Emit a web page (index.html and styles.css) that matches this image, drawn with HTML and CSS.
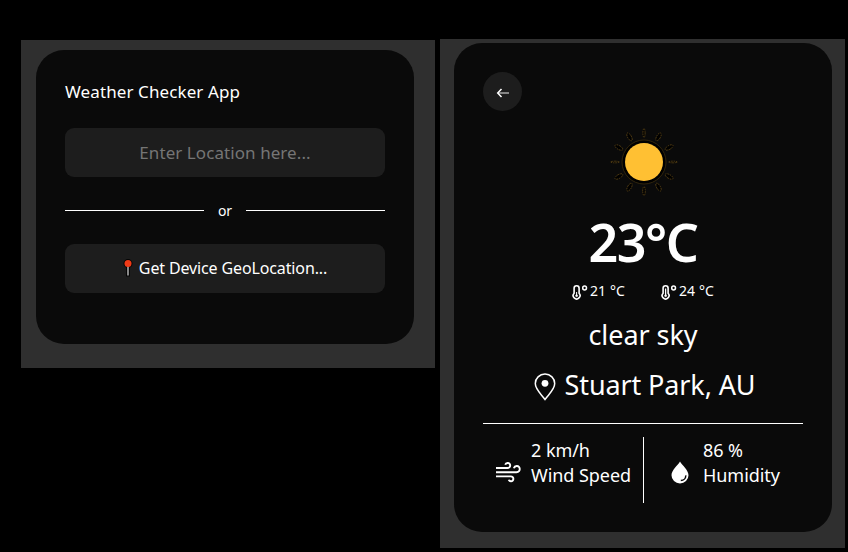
FILE: index.html
```html
<!DOCTYPE html>
<html lang="en">
<head>
<meta charset="utf-8">
<title>Weather Checker App</title>
<link rel="stylesheet" href="styles.css">
</head>
<body>
<main class="screens">
  <section class="panel panel-search">
    <div class="card card-search">
      <h1 class="title">Weather Checker App</h1>
      <input class="field" type="text" placeholder="Enter Location here...">
      <div class="divider"><span class="divider-text">or</span></div>
      <button class="geo" type="button">
        <svg class="pin" viewBox="0 0 10 18"><circle cx="5" cy="4.6" r="4.5" fill="#050505"/><path d="M3 8h4v9.400H3z" fill="#050505"/><path d="M5 7v9.500" stroke="#e0e0e0" stroke-width="1.2"/><circle cx="5" cy="4.5" r="3.500" fill="#f03a17"/></svg>
        <span class="geo-text">Get Device GeoLocation...</span>
      </button>
    </div>
  </section>
  <section class="panel panel-weather">
    <div class="card card-weather">
      <button class="back" type="button" aria-label="Back">
        <svg width="14" height="12" viewBox="0 0 14 12" fill="none"><path d="M2 6h11" stroke="#a0a0a0" stroke-width="1.6"/><path d="M5.500 2 1.700 6l3.800 4" stroke="#fff" stroke-width="1.500"/></svg>
      </button>
      <svg class="sun" width="71" height="70" viewBox="-36 -35 71 70">
        <circle r="22" fill="#000" stroke="#3c2d0e" stroke-width=".8"/>
        <circle r="19" fill="#ffc033"/>
        <g fill="#000" stroke="#6b501a" stroke-width=".7" stroke-dasharray="1.6 .8">
          <ellipse cx="0" cy="-29" rx="1.1" ry="4.400"/>
          <ellipse cx="0" cy="-29" rx="1.900" ry="4.400" transform="rotate(30)"/>
          <ellipse cx="0" cy="-29" rx="1.900" ry="4.400" transform="rotate(60)"/>
          <ellipse cx="0" cy="-29" rx=".8" ry="4.400" transform="rotate(90)"/>
          <ellipse cx="0" cy="-29" rx="1.900" ry="4.400" transform="rotate(120)"/>
          <ellipse cx="0" cy="-29" rx="1.900" ry="4.400" transform="rotate(150)"/>
          <ellipse cx="0" cy="-29" rx="1.300" ry="4.400" transform="rotate(180)"/>
          <ellipse cx="0" cy="-29" rx="1.900" ry="4.400" transform="rotate(210)"/>
          <ellipse cx="0" cy="-29" rx="1.900" ry="4.400" transform="rotate(240)"/>
          <ellipse cx="0" cy="-29" rx=".8" ry="4.400" transform="rotate(270)"/>
          <ellipse cx="0" cy="-29" rx="1.900" ry="4.400" transform="rotate(300)"/>
          <ellipse cx="0" cy="-29" rx="1.900" ry="4.400" transform="rotate(330)"/>
        </g>
      </svg>
      <div class="temp">23°C</div>
      <div class="range">
        <div class="range-item">
          <svg width="16" height="16" viewBox="0 0 16 16" fill="none" stroke="#fff"><path d="M2.100 9.200V4.200a2.500 2.500 0 0 1 5 0v5a3.400 3.400 0 1 1-5 0Z" stroke-width="1.600"/><path d="M4.600 8v3.300" stroke-width="1"/><circle cx="4.600" cy="11.700" r="1" fill="#fff" stroke-width=".6"/><circle cx="12.600" cy="4" r="1.900" stroke-width="1.500"/></svg>
          <span>21 °C</span>
        </div>
        <div class="range-item">
          <svg width="16" height="16" viewBox="0 0 16 16" fill="none" stroke="#fff"><path d="M2.100 9.200V4.200a2.500 2.500 0 0 1 5 0v5a3.400 3.400 0 1 1-5 0Z" stroke-width="1.600"/><path d="M4.600 4.500v7" stroke-width="1.300"/><circle cx="4.600" cy="11.700" r="1" fill="#fff" stroke-width=".6"/><circle cx="12.600" cy="4" r="1.900" stroke-width="1.500"/></svg>
          <span>24 °C</span>
        </div>
      </div>
      <div class="sky">clear sky</div>
      <div class="place">
        <svg width="22" height="28" viewBox="0 0 22 28"><path d="M11 1.100c-5.500 0-9.700 4.200-9.700 9.500C1.300 16.500 7 21 11 26.500 15 21 20.700 16.500 20.700 10.600 20.700 5.300 16.500 1.100 11 1.100Z" fill="none" stroke="#fff" stroke-width="1.500"/><circle cx="11" cy="10.300" r="3.400" fill="#fff"/></svg>
        <span>Stuart Park, AU</span>
      </div>
      <div class="stats">
        <div class="stat stat-wind">
          <svg width="26" height="22" viewBox="0 0 26 22" fill="none" stroke="#fff" stroke-width="1.900"><path d="M1 7h11.500c3.800 0 3.300-5.300.1-5-1.300.1-2.100.8-2.400 1.800"/><path d="M1 11.200h20.500c4.600 0 4-6.500.2-6.200-1.700.1-2.500 1-2.900 2.200"/><path d="M1 15.400h14.700c3.700 0 3.300 5 .2 4.800-1.100-.1-1.900-.6-2.200-1.500"/></svg>
          <div class="stat-text"><span>2 km/h</span><span>Wind Speed</span></div>
        </div>
        <div class="stat stat-humidity">
          <svg width="18" height="23" viewBox="0 0 18 23"><path d="M9 .5C7 4.200.5 9 .5 14.200a8.500 8.300 0 0 0 17 0C17.500 9 11 4.200 9 .5Z" fill="#fff"/><path d="M14.800 14.400c.1 2.900-2.200 5-5 5.200" fill="none" stroke="#0a0a0a" stroke-width="1.500"/></svg>
          <div class="stat-text"><span>86 %</span><span>Humidity</span></div>
        </div>
      </div>
    </div>
  </section>
</main>
</body>
</html>
```
FILE: styles.css
```css
* { box-sizing: border-box; }
body {
  margin: 0;
  background: #000;
  color: #fff;
  font-family: "Noto Sans", "Open Sans", sans-serif;
}
button, input { font: inherit; color: inherit; border: 0; outline: 0; }
svg { display: block; flex: none; }
.screens {
  display: flex;
  align-items: flex-start;
  gap: 5px;
  height: 552px;
  padding: 39px 0 0 21px;
}
.panel { background: #2f2f2f; flex: none; }
.panel-search { width: 414px; height: 328px; margin-top: 1px; padding: 10px 21px 0 15px; }
.panel-weather { width: 405px; height: 509px; padding: 4px 13px 0 14px; }
.card { background: #0a0a0a; border-radius: 28px; padding: 29px; }
.card-search { height: 294px; }
.card-weather { height: 489px; display: flex; flex-direction: column; align-items: center; }
.title { margin: 0; font-size: 17px; line-height: 25px; font-weight: 400; letter-spacing: .1px; }
.field {
  display: block;
  width: 100%;
  height: 49px;
  margin-top: 24px;
  padding: 0;
  border-radius: 9px;
  background: #1d1d1d;
  text-align: center;
  font-size: 17px;
  letter-spacing: .07px;
}
.field::placeholder { color: #757575; opacity: 1; }
.divider {
  display: flex;
  align-items: center;
  gap: 14px;
  height: 20px;
  margin-top: 23px;
  font-size: 14px;
}
.divider::before, .divider::after { content: ""; flex: 1; height: 1px; background: #fff; }
.divider-text { padding-top: 2px; line-height: 20px; }
.geo {
  display: flex;
  align-items: center;
  justify-content: center;
  gap: 6px;
  width: 100%;
  height: 49px;
  margin-top: 24px;
  padding: 0 0 2px;
  border-radius: 9px;
  background: #1d1d1d;
  font-size: 16px;
  letter-spacing: -.13px;
}
.pin { width: 10px; height: 18px; margin-top: 1px; }
.back {
  display: grid;
  place-items: center;
  align-self: flex-start;
  width: 39px;
  height: 39px;
  padding: 3px 0 0;
  border-radius: 50%;
  background: #1d1d1d;
}
.sun { margin-top: 16px; }
.temp { margin-top: 10px; font-size: 52px; line-height: 70px; font-weight: 600; letter-spacing: -1.4px; }
.range { display: flex; gap: 36px; height: 20px; margin-top: 4px; font-size: 14px; line-height: 20px; letter-spacing: .1px; }
.range-item { display: flex; align-items: center; gap: 2px; }
.range-item svg { margin-top: 2px; }
.sky { margin-top: 14px; font-size: 27px; line-height: 40px; letter-spacing: -.05px; }
.place { display: flex; align-items: center; gap: 9px; margin-top: 10px; padding-left: 3px; font-size: 27px; line-height: 40px; letter-spacing: -.12px; }
.place svg { margin-top: 4px; }
.stats { display: flex; width: 100%; margin-top: 18px; padding-top: 13px; border-top: 1px solid #fff; }
.stat { display: flex; width: 159px; height: 66px; font-size: 18px; line-height: 25px; letter-spacing: -.05px; flex: none; }
.stat-wind { width: 161px; padding-left: 12px; border-right: 1px solid #fff; gap: 10px; }
.stat-wind svg { margin-top: 24px; }
.stat-humidity { padding-left: 27px; gap: 14px; }
.stat-humidity svg { margin-top: 24px; }
.stat-text { display: flex; flex-direction: column; padding-top: 1px; white-space: nowrap; }
```
